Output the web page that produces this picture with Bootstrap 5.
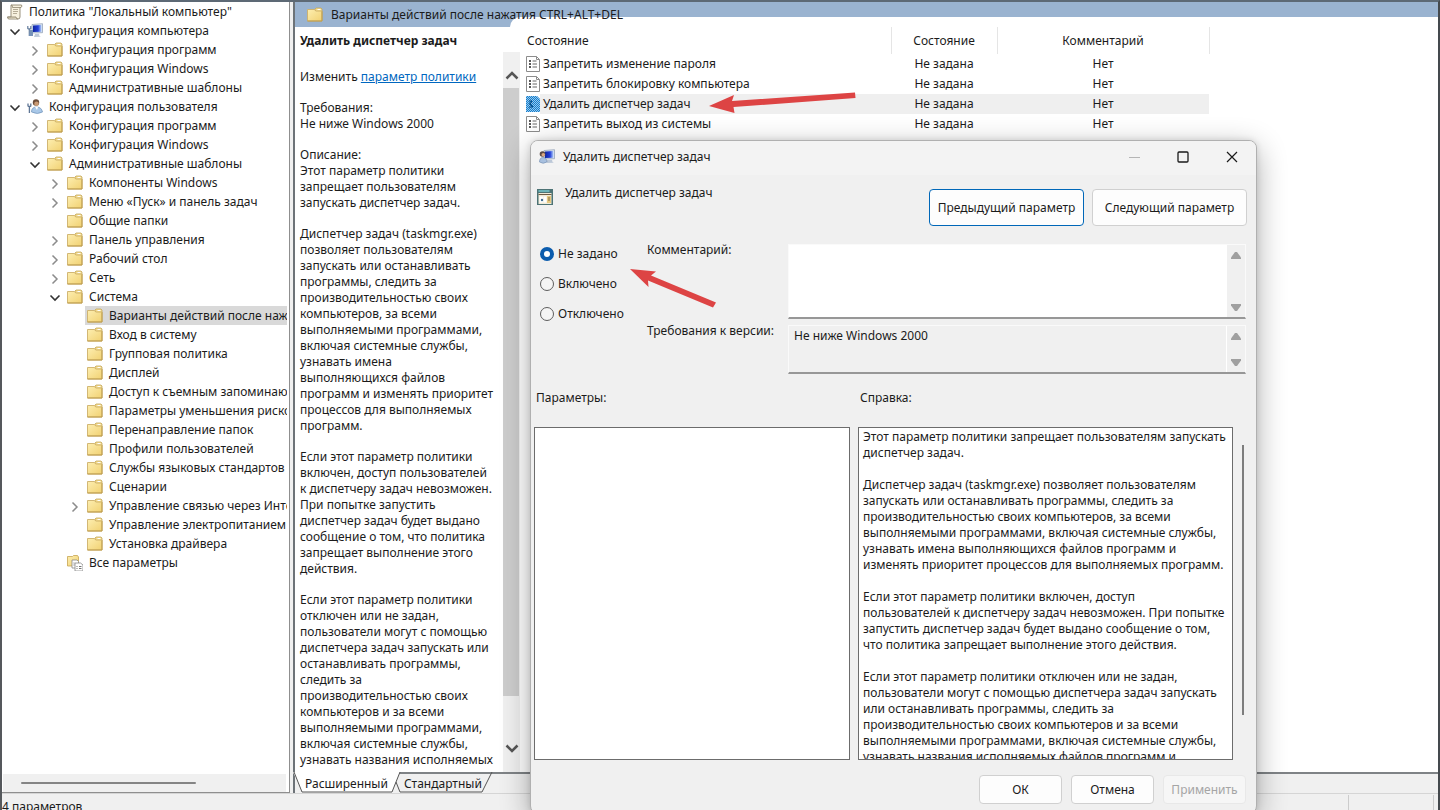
<!DOCTYPE html>
<html lang="ru">
<head>
<meta charset="utf-8">
<meta name="viewport" content="width=device-width, initial-scale=1">
<title>Редактор локальной групповой политики</title>
<link href="https://cdn.jsdelivr.net/npm/bootstrap@5.3.0/dist/css/bootstrap.min.css" rel="stylesheet">
<style>
:root{--face:#f0f0f0;--line:#7d8083}
body{font-family:"Noto Sans","Open Sans",sans-serif;font-size:12px;line-height:16px;color:#1b1b1b;background:var(--face)}
button,input,textarea{font:inherit;color:inherit}
.app-window{height:100vh;border-left:2px solid #55585c;border-top:2px solid #5d6975;border-right:2px solid #44494d}
/* tree */
.tree-pane{width:288px;background:#fff;border-right:1px solid #8f8f8f;border-bottom:1px solid #8f8f8f}
.tree-pane ul{list-style:none;margin:0;padding:0}
.tree-pane ul ul{padding-left:20px}
.tree-pane .tree-root{padding-left:5px;margin-right:2px;overflow:hidden}
.tree-row{height:19px;white-space:nowrap}
.twisty{width:20px;height:16px;padding:0;border:0;background:none;flex:none;display:flex}
.twisty svg{margin:3px 0 0 2px}
.leaf-gap{width:20px;flex:none}
.node{height:19px;display:flex;align-items:center;gap:6px;color:inherit;text-decoration:none;padding-right:4px}
.node.chosen{background:#d9d9d9;box-shadow:-2px 0 0 #d9d9d9;flex:1}
.ico{width:16px;height:16px;flex:none;overflow:visible}
.hscroll{height:18px;margin:0 3px 0 1px;background:var(--face);padding:8px 0 0 18px}
.hscroll div{height:2px;width:66%;background:#858585;border-radius:1px}
/* result pane */
.result-pane{border-left:2px solid #6d7378;margin-left:3px;min-width:0}
.result-title{position:relative;height:25px;background:#9ab3d0}
.result-title::after{content:"";position:absolute;left:215px;right:0;top:15px;bottom:0;background:#fff;border-top-left-radius:12px}
.result-title h1{font-size:12px;line-height:16px;font-weight:400;margin:0;position:relative;z-index:1}
.info-pane{width:208px;overflow:hidden;white-space:nowrap;padding:6px 0 0 5px}
.info-pane p{margin:0 0 15px}
.info-pane a{color:#0067c0}
.info-pane h2{font-size:12px;line-height:16px;font-weight:700;margin:0 0 20px}
.vscroll{width:17px;margin-top:25px;background:var(--face)}
.vscroll button{border:0;background:none;padding:8px 0 0;width:17px;height:36px}
.vscroll .btn-down{height:76px;padding:0 0 20px}
.vscroll .thumb{width:16px;flex:1;background:#cdcdcd}
.policy-list{table-layout:fixed;width:685px;border-collapse:collapse;white-space:nowrap}
.policy-list th{font-weight:400;height:27px;border-right:1px solid #e5e5e5;text-align:center;padding:0}
.policy-list th:first-child{text-align:left;padding-left:3px}
.policy-list td{height:20px;padding:0;text-align:center}
.policy-list td:first-child{text-align:left}
.policy-list .ico{margin:0 2px 0 1px}
.policy-list .picked td{background:#efefef}
.policy-list .picked td:first-child{background:linear-gradient(90deg,#fff 16px,#efefef 16px)}
.view-tabs{height:21px;border-top:2px solid #7f8386;margin-left:-2px}
.view-tabs button{border:0;background:none;padding:2px 0 0;height:18px;position:relative}
.view-tabs svg{position:absolute;left:0;top:-2px}
.status{height:17px;border-top:1px solid #d5d5d5;line-height:16px;overflow:hidden;padding-top:5px}
.status .cells{border-right:1px solid #ccc;width:86px;border-left:1px solid #ccc;margin:-4px 4px 0 0}
/* dialog */
.policy-dialog{position:absolute;left:530px;top:140px;width:727px;background:var(--face);border:1px solid #b0b0b0;border-radius:8px;box-shadow:0 8px 30px rgba(0,0,0,.32),0 0 6px rgba(0,0,0,.12);overflow:hidden}
.dlg-title{height:34px;background:#f3f3f3;padding:0 0 2px 8px}
.dlg-title h2,.dlg-head h3{font-size:12px;line-height:16px;font-weight:400;margin:0}
.win-btn{width:49px;height:32px;border:0;background:none;padding:0}
.win-btn svg{display:block;margin:0 auto}
.dlg-head{padding:10px 9px 0 6px}
.push{background:#fdfdfd;border:1px solid #d0d0d0;border-radius:4px;padding:0;height:29px;width:83px}
.push.wide{width:155px;height:37px}
.push.focus-blue{border-color:#0067b8}
.push:disabled{background:#f6f6f6;border-color:#e8e8e8;color:#a5a5a5}
.dlg-body{padding-right:10px}
.states{width:108px;padding:4px 0 0 9px}
.states div{height:30px;display:flex;align-items:flex-start;gap:4px}
.states input{appearance:none;width:14px;height:14px;border:1px solid #5e5e5e;border-radius:50%;background:#f5f5f5;margin:1px 0 0;flex:none}
.states input:checked{border:4px solid #0b5cad;background:#fff}
.field-lab{width:141px;flex:none}
.well{background:#fff;border:1px solid #fafafa;border-bottom:2px solid #979797;margin-top:2px;height:75px}
.well textarea{border:0;resize:none;background:none;padding:2px 5px;overflow:hidden;outline:0;flex:1;display:block}
.well.grey{background:var(--face);height:49px}
.well.grey textarea{border-right:1px solid #fff}
.spin{width:18px;background:var(--face)}
.spin button{border:0;background:none;padding:0;height:19px;line-height:0}
.dlg-panes{padding-left:3px}
.pane-cap{height:37px;padding-left:2px}
.opts-pane{width:316px}
.help-pane{width:375px}
.box{border:1px solid #6c6c6c;background:#fff;height:333px;overflow:hidden}
.help-text{padding:1px 4px;white-space:nowrap}
.help-text p{margin:0 0 16px}
.help-bar{width:2px;height:270px;margin:55px 0 0 9px;background:#7d7d7d}
.dlg-foot{gap:9px;padding:15px 10px 9px}
.pointer{position:absolute;pointer-events:none}
</style>
</head>
<body class="overflow-hidden">
<svg width="0" height="0" class="position-absolute" aria-hidden="true">
  <defs>
    <linearGradient id="gold" x1="0" y1="0" x2="1" y2="1"><stop offset="0" stop-color="#fdeeb0"/><stop offset="1" stop-color="#f1d172"/></linearGradient>
    <linearGradient id="screen" x1="0" y1="0" x2="1" y2="0"><stop offset="0" stop-color="#1025a0"/><stop offset=".6" stop-color="#2340d8"/><stop offset="1" stop-color="#b7d3fb"/></linearGradient>
    <symbol id="folder" viewBox="0 0 16 16"><path d="M8 4V2L9 1h5l1 1V5" fill="#f5dc8d" stroke="#c2a65e" stroke-width=".8"/><path d="M.5 2.500h7l1.200 1.500H15V14H.5z" fill="url(#gold)" stroke="#cdb06a" stroke-width=".9"/><path d="M10.500 2.500h3" stroke="#fff" stroke-width="1"/><path d="M.5 14H15V4.500" fill="none" stroke="#bd9c4d"/></symbol>
    <symbol id="scroll" viewBox="0 0 16 16"><path d="M4 1h10.500q1 1-.5 2.500h-1V13q0 2-2 2H2q-1.500 0-1.500-2H4z" fill="#f7f1df" stroke="#8f8671" stroke-width=".9"/><path d="M.5 13h8.500q0 2 2 2" fill="#e5dcc2" stroke="#8f8671" stroke-width=".9"/><path d="M4 1q1.800 0 1.500 2.500H13" fill="none" stroke="#8f8671" stroke-width=".8"/><path d="M6 5.500h5M6 7.500h5M6 9.500h4" stroke="#a39a84" stroke-width=".8"/></symbol>
    <symbol id="pc" viewBox="0 0 16 16"><path d="M5 1.500l10.500-.8v9L5 10z" fill="#dbe5f2" stroke="#8b9bb2" stroke-width=".7"/><path d="M6 2.500l8.500-.6v6.800L6 9z" fill="url(#screen)"/><path d="M8 11l4-.3.500 2.300 1.500.8-7 .2z" fill="#bcc8d8"/><path d="M.8 3v3M3.800 3v3M.8 5.800h3M2.300 6v7" stroke="#647d9d" stroke-width="1.200"/><path d="M3 7h3v6H2z" fill="#7692b8"/></symbol>
    <symbol id="userpc" viewBox="0 0 16 16"><path d="M5 1.500l10.500-.8v9L5 10z" fill="#dbe5f2" stroke="#8b9bb2" stroke-width=".7"/><path d="M6 2.500l8.500-.6v6.800L6 9z" fill="url(#screen)"/><path d="M8 11l5-.3.500 2.300 1.500.8-7 .2z" fill="#bcc8d8"/><circle cx="3.500" cy="5" r="2.800" fill="#5b4a43"/><circle cx="4.300" cy="5.800" r="1.800" fill="#dba981"/><path d="M.5 13q0-4.500 3.500-4.500t4 4.500q-4 2.500-7.500 0z" fill="#a8c0df" stroke="#6e89ad" stroke-width=".6"/></symbol>
    <symbol id="user" viewBox="0 0 16 16"><circle cx="9" cy="3.500" r="3.200" fill="#6b4d3a"/><circle cx="9.500" cy="4.800" r="2.300" fill="#c99a74"/><path d="M4.500 13q0-5 5-5t6 5q-5 3-11 0z" fill="#a9c8e8" stroke="#6e91b8" stroke-width=".7"/><path d="M8 8l2 3 1-3z" fill="#fff"/><path d="M1 4.500v3M3.800 4.500v3M1 7.300h3M2.400 7v7" stroke="#5f7695" stroke-width="1.300"/></symbol>
    <symbol id="all" viewBox="0 0 16 16"><path d="M.5 1.500h5l1-1h4l1 1.500v9H.5z" fill="url(#gold)" stroke="#c7a552" stroke-width=".8"/><path d="M5 5h5l1.500 1.500V13H5z" fill="#fff" stroke="#888" stroke-width=".8"/><path d="M8 8h5.500l2.500 2v6H8z" fill="#fff" stroke="#888" stroke-width=".8"/><path d="M9.500 11.500h1M12 11.500h2.500M9.500 13.500h1M12 13.500h2.500M6.500 8h1M6.500 10h1" stroke="#777"/></symbol>
    <symbol id="sheet" viewBox="0 0 16 16"><path d="M1.500.5h10l3 3v12h-13z" fill="#fff" stroke="#8c8c8c"/><path d="M11.500.5v3h3" fill="none" stroke="#8c8c8c"/><path d="M4 5h2M4 8h2M4 11h2" stroke="#222" stroke-width="1.600"/><path d="M7.500 5h4M7.500 8h4.500M7.500 11h4.500" stroke="#666"/></symbol>
    <pattern id="dots" width="2" height="2" patternUnits="userSpaceOnUse"><rect width="2" height="2" fill="#c4e1f5"/><path d="M0 0h1v1H0zM1 1h1v1H1z" fill="#0b78c8"/></pattern>
    <symbol id="sheet-on" viewBox="0 0 16 16"><path d="M1 0h11l3 3v13H1z" fill="url(#dots)"/><path d="M1 0h11l3 3v13H1z" fill="#2b90dc" fill-opacity=".3"/><path d="M4 5h3M4 8h2M4 11h3M7 5l-2 3 3 3" stroke="#0b4f88" stroke-width="1.100" fill="none"/></symbol>
    <symbol id="setting" viewBox="0 0 16 16"><path d="M0 0h16v16H0z" fill="#4d7375"/><path d="M1.500 1h11v2h-11z" fill="#6cb3b8"/><path d="M1.500 4h13v11h-13z" fill="#f0ead7"/><path d="M1.500 5.500h13" stroke="#6b5b44"/><path d="M2.500 7.500h4v6h-4zM7 7.500h2.500v6H7z" fill="#fff"/><circle cx="5" cy="11" r="1.200" fill="#3d6b92"/><path d="M10 7h4v7h-4z" fill="#e7c980"/><path d="M11 9h2M11 11h2" stroke="#7a6b45"/></symbol>
    <symbol id="open" viewBox="0 0 12 12"><path d="M1.500 3.500L6 8l4.500-4.500" fill="none" stroke="#333" stroke-width="1.600"/></symbol>
    <symbol id="shut" viewBox="0 0 12 12"><path d="M3.500 1.500L8 6l-4.500 4.500" fill="none" stroke="#8c8c8c" stroke-width="1.500"/></symbol>
  </defs>
</svg>

<div class="app-window d-flex flex-column position-relative">
  <div class="d-flex flex-grow-1" style="min-height:0">
    <nav class="tree-pane d-flex flex-column flex-shrink-0 overflow-hidden" aria-label="Дерево политик">
      <ul class="tree-root flex-grow-1">
        <li><div class="tree-row d-flex align-items-center"><a href="#" class="node"><svg class="ico"><use href="#scroll"/></svg>Политика "Локальный компьютер"</a></div></li>
        <li><div class="tree-row d-flex align-items-center"><button class="twisty" aria-label="Свернуть"><svg width="12" height="12"><use href="#open"/></svg></button><a href="#" class="node"><svg class="ico"><use href="#pc"/></svg>Конфигурация компьютера</a></div>
          <ul>
            <li><div class="tree-row d-flex align-items-center"><button class="twisty" aria-label="Развернуть"><svg width="12" height="12"><use href="#shut"/></svg></button><a href="#" class="node"><svg class="ico"><use href="#folder"/></svg>Конфигурация программ</a></div></li>
            <li><div class="tree-row d-flex align-items-center"><button class="twisty" aria-label="Развернуть"><svg width="12" height="12"><use href="#shut"/></svg></button><a href="#" class="node"><svg class="ico"><use href="#folder"/></svg>Конфигурация Windows</a></div></li>
            <li><div class="tree-row d-flex align-items-center"><button class="twisty" aria-label="Развернуть"><svg width="12" height="12"><use href="#shut"/></svg></button><a href="#" class="node"><svg class="ico"><use href="#folder"/></svg>Административные шаблоны</a></div></li>
          </ul></li>
        <li><div class="tree-row d-flex align-items-center"><button class="twisty" aria-label="Свернуть"><svg width="12" height="12"><use href="#open"/></svg></button><a href="#" class="node"><svg class="ico"><use href="#user"/></svg>Конфигурация пользователя</a></div>
          <ul>
            <li><div class="tree-row d-flex align-items-center"><button class="twisty" aria-label="Развернуть"><svg width="12" height="12"><use href="#shut"/></svg></button><a href="#" class="node"><svg class="ico"><use href="#folder"/></svg>Конфигурация программ</a></div></li>
            <li><div class="tree-row d-flex align-items-center"><button class="twisty" aria-label="Развернуть"><svg width="12" height="12"><use href="#shut"/></svg></button><a href="#" class="node"><svg class="ico"><use href="#folder"/></svg>Конфигурация Windows</a></div></li>
            <li><div class="tree-row d-flex align-items-center"><button class="twisty" aria-label="Свернуть"><svg width="12" height="12"><use href="#open"/></svg></button><a href="#" class="node"><svg class="ico"><use href="#folder"/></svg>Административные шаблоны</a></div>
              <ul>
                <li><div class="tree-row d-flex align-items-center"><button class="twisty" aria-label="Развернуть"><svg width="12" height="12"><use href="#shut"/></svg></button><a href="#" class="node"><svg class="ico"><use href="#folder"/></svg>Компоненты Windows</a></div></li>
                <li><div class="tree-row d-flex align-items-center"><button class="twisty" aria-label="Развернуть"><svg width="12" height="12"><use href="#shut"/></svg></button><a href="#" class="node"><svg class="ico"><use href="#folder"/></svg>Меню «Пуск» и панель задач</a></div></li>
                <li><div class="tree-row d-flex align-items-center"><span class="leaf-gap"></span><a href="#" class="node"><svg class="ico"><use href="#folder"/></svg>Общие папки</a></div></li>
                <li><div class="tree-row d-flex align-items-center"><button class="twisty" aria-label="Развернуть"><svg width="12" height="12"><use href="#shut"/></svg></button><a href="#" class="node"><svg class="ico"><use href="#folder"/></svg>Панель управления</a></div></li>
                <li><div class="tree-row d-flex align-items-center"><button class="twisty" aria-label="Развернуть"><svg width="12" height="12"><use href="#shut"/></svg></button><a href="#" class="node"><svg class="ico"><use href="#folder"/></svg>Рабочий стол</a></div></li>
                <li><div class="tree-row d-flex align-items-center"><button class="twisty" aria-label="Развернуть"><svg width="12" height="12"><use href="#shut"/></svg></button><a href="#" class="node"><svg class="ico"><use href="#folder"/></svg>Сеть</a></div></li>
                <li><div class="tree-row d-flex align-items-center"><button class="twisty" aria-label="Свернуть"><svg width="12" height="12"><use href="#open"/></svg></button><a href="#" class="node"><svg class="ico"><use href="#folder"/></svg>Система</a></div>
                  <ul>
                    <li><div class="tree-row d-flex align-items-center"><span class="leaf-gap"></span><a href="#" class="node chosen"><svg class="ico"><use href="#folder"/></svg>Варианты действий после нажатия</a></div></li>
                    <li><div class="tree-row d-flex align-items-center"><span class="leaf-gap"></span><a href="#" class="node"><svg class="ico"><use href="#folder"/></svg>Вход в систему</a></div></li>
                    <li><div class="tree-row d-flex align-items-center"><span class="leaf-gap"></span><a href="#" class="node"><svg class="ico"><use href="#folder"/></svg>Групповая политика</a></div></li>
                    <li><div class="tree-row d-flex align-items-center"><span class="leaf-gap"></span><a href="#" class="node"><svg class="ico"><use href="#folder"/></svg>Дисплей</a></div></li>
                    <li><div class="tree-row d-flex align-items-center"><span class="leaf-gap"></span><a href="#" class="node"><svg class="ico"><use href="#folder"/></svg>Доступ к съемным запоминающим</a></div></li>
                    <li><div class="tree-row d-flex align-items-center"><span class="leaf-gap"></span><a href="#" class="node"><svg class="ico"><use href="#folder"/></svg>Параметры уменьшения рисков</a></div></li>
                    <li><div class="tree-row d-flex align-items-center"><span class="leaf-gap"></span><a href="#" class="node"><svg class="ico"><use href="#folder"/></svg>Перенаправление папок</a></div></li>
                    <li><div class="tree-row d-flex align-items-center"><span class="leaf-gap"></span><a href="#" class="node"><svg class="ico"><use href="#folder"/></svg>Профили пользователей</a></div></li>
                    <li><div class="tree-row d-flex align-items-center"><span class="leaf-gap"></span><a href="#" class="node"><svg class="ico"><use href="#folder"/></svg>Службы языковых стандартов</a></div></li>
                    <li><div class="tree-row d-flex align-items-center"><span class="leaf-gap"></span><a href="#" class="node"><svg class="ico"><use href="#folder"/></svg>Сценарии</a></div></li>
                    <li><div class="tree-row d-flex align-items-center"><button class="twisty" aria-label="Развернуть"><svg width="12" height="12"><use href="#shut"/></svg></button><a href="#" class="node"><svg class="ico"><use href="#folder"/></svg>Управление связью через Интернет</a></div></li>
                    <li><div class="tree-row d-flex align-items-center"><span class="leaf-gap"></span><a href="#" class="node"><svg class="ico"><use href="#folder"/></svg>Управление электропитанием</a></div></li>
                    <li><div class="tree-row d-flex align-items-center"><span class="leaf-gap"></span><a href="#" class="node"><svg class="ico"><use href="#folder"/></svg>Установка драйвера</a></div></li>
                  </ul></li>
                <li><div class="tree-row d-flex align-items-center"><span class="leaf-gap"></span><a href="#" class="node"><svg class="ico"><use href="#all"/></svg>Все параметры</a></div></li>
              </ul></li>
          </ul></li>
      </ul>
      <div class="hscroll"><div></div></div>
    </nav>

    <main class="result-pane d-flex flex-column flex-grow-1">
      <div class="result-title d-flex align-items-center ps-2 flex-shrink-0"><svg class="ico ms-1 me-2"><use href="#folder"/></svg><h1>Варианты действий после нажатия CTRL+ALT+DEL</h1></div>
      <div class="d-flex flex-grow-1 bg-white" style="min-height:0">
        <section class="info-pane flex-shrink-0">
          <h2>Удалить диспетчер задач</h2>
          <p>Изменить <a href="#">параметр политики</a></p>
          <p>Требования:<br>Не ниже Windows 2000</p>
          <p>Описание:<br>Этот параметр политики<br>запрещает пользователям<br>запускать диспетчер задач.</p>
          <p>Диспетчер задач (taskmgr.exe)<br>позволяет пользователям<br>запускать или останавливать<br>программы, следить за<br>производительностью своих<br>компьютеров, за всеми<br>выполняемыми программами,<br>включая системные службы,<br>узнавать имена<br>выполняющихся файлов<br>программ и изменять приоритет<br>процессов для выполняемых<br>программ.</p>
          <p>Если этот параметр политики<br>включен, доступ пользователей<br>к диспетчеру задач невозможен.<br>При попытке запустить<br>диспетчер задач будет выдано<br>сообщение о том, что политика<br>запрещает выполнение этого<br>действия.</p>
          <p>Если этот параметр политики<br>отключен или не задан,<br>пользователи могут с помощью<br>диспетчера задач запускать или<br>останавливать программы,<br>следить за<br>производительностью своих<br>компьютеров и за всеми<br>выполняемыми программами,<br>включая системные службы,<br>узнавать названия исполняемых</p>
        </section>
        <div class="vscroll d-flex flex-column flex-shrink-0">
          <button aria-label="Вверх"><svg width="14" height="10" viewBox="0 0 14 10"><path d="M1.500 8.500L7 3l5.500 5.500" fill="none" stroke="#555" stroke-width="2.500"/></svg></button>
          <div class="thumb"></div>
          <button class="btn-down" aria-label="Вниз"><svg width="14" height="10" viewBox="0 0 14 10" class="mt-5"><path d="M1.500 1.500L7 7l5.500-5.500" fill="none" stroke="#555" stroke-width="2.500"/></svg></button>
        </div>
        <section class="flex-grow-1 ps-1">
          <table class="policy-list">
            <colgroup><col style="width:367px"><col style="width:106px"><col style="width:212px"></colgroup>
            <thead><tr><th>Состояние</th><th>Состояние</th><th>Комментарий</th></tr></thead>
            <tbody>
              <tr><td><svg class="ico"><use href="#sheet"/></svg>Запретить изменение пароля</td><td>Не задана</td><td>Нет</td></tr>
              <tr><td><svg class="ico"><use href="#sheet"/></svg>Запретить блокировку компьютера</td><td>Не задана</td><td>Нет</td></tr>
              <tr class="picked"><td><svg class="ico"><use href="#sheet-on"/></svg>Удалить диспетчер задач</td><td>Не задана</td><td>Нет</td></tr>
              <tr><td><svg class="ico"><use href="#sheet"/></svg>Запретить выход из системы</td><td>Не задана</td><td>Нет</td></tr>
            </tbody>
          </table>
        </section>
      </div>
      <div class="view-tabs position-relative flex-shrink-0">
        <svg width="202" height="21" aria-hidden="true"><path d="M0 0l9 20h90l8-20z" fill="#fff"/><path d="M1 0l8 20h90l8-20M103 10l4 10h82l10-20" fill="none" stroke="#555"/></svg>
        <button class="ms-2 ps-1">Расширенный</button><button class="ms-3">Стандартный</button>
      </div>
    </main>
  </div>
  <footer class="status d-flex justify-content-between flex-shrink-0"><span>4 параметров</span><span class="cells"></span></footer>

  <svg class="pointer" style="left:704px;top:86px" width="156" height="32" viewBox="706 88 156 32" aria-hidden="true"><path d="M709 106l25-11-2 6 123-8.500.5 5.500-122 9 1 6z" fill="#dd4444"/></svg>
</div>

<section class="policy-dialog" role="dialog" aria-labelledby="dlgTitle">
  <header class="dlg-title d-flex align-items-center">
    <svg class="ico"><use href="#userpc"/></svg><h2 id="dlgTitle" class="ms-2 flex-grow-1">Удалить диспетчер задач</h2>
    <button class="win-btn" aria-label="Свернуть" disabled><svg width="12" height="12"><path d="M1 6.500h11" stroke="#b5b5b5"/></svg></button>
    <button class="win-btn" aria-label="Развернуть"><svg width="12" height="12"><rect x="1" y="1" width="10" height="10" rx="1" fill="none" stroke="#1a1a1a" stroke-width="1.300"/></svg></button>
    <button class="win-btn" aria-label="Закрыть"><svg width="12" height="12"><path d="M1 1l10 10M11 1L1 11" stroke="#1a1a1a" stroke-width="1.200"/></svg></button>
  </header>
  <div class="dlg-head d-flex align-items-start">
    <svg class="ico mt-1"><use href="#setting"/></svg><h3 class="ms-2 ps-1 flex-grow-1">Удалить диспетчер задач</h3>
    <button class="push wide focus-blue mt-1">Предыдущий параметр</button><button class="push wide ms-2 mt-1">Следующий параметр</button>
  </div>
  <div class="dlg-body d-flex mt-3">
    <div class="states">
      <div><input type="radio" name="st" id="s1" checked><label for="s1">Не задано</label></div>
      <div><input type="radio" name="st" id="s2"><label for="s2">Включено</label></div>
      <div><input type="radio" name="st" id="s3"><label for="s3">Отключено</label></div>
    </div>
    <div class="flex-grow-1 d-flex flex-column gap-1 ps-2">
      <div class="d-flex"><label class="field-lab" for="cm">Комментарий:</label>
        <div class="well d-flex flex-grow-1"><textarea id="cm" rows="4"></textarea>
          <div class="spin d-flex flex-column justify-content-between"><button aria-label="Вверх"><svg width="10" height="8"><path d="M0 8V6.500L4 1h2l4 5.500V8z" fill="#a0a0a0"/></svg></button><button aria-label="Вниз"><svg width="10" height="8"><path d="M0 0v1.500L4 7h2l4-5.500V0z" fill="#a0a0a0"/></svg></button></div></div></div>
      <div class="d-flex"><label class="field-lab" for="rq">Требования к версии:</label>
        <div class="well grey d-flex flex-grow-1"><textarea id="rq" rows="2" readonly>Не ниже Windows 2000</textarea>
          <div class="spin d-flex flex-column justify-content-between"><button aria-label="Вверх"><svg width="10" height="8"><path d="M0 8V6.500L4 1h2l4 5.500V8z" fill="#a0a0a0"/></svg></button><button aria-label="Вниз"><svg width="10" height="8"><path d="M0 0v1.500L4 7h2l4-5.500V0z" fill="#a0a0a0"/></svg></button></div></div></div>
    </div>
  </div>
  <div class="dlg-panes d-flex mt-3">
    <div class="opts-pane me-2"><div class="pane-cap">Параметры:</div><div class="box"></div></div>
    <div class="help-pane"><div class="pane-cap">Справка:</div>
      <div class="box help-text">
        <p>Этот параметр политики запрещает пользователям запускать<br>диспетчер задач.</p>
        <p>Диспетчер задач (taskmgr.exe) позволяет пользователям<br>запускать или останавливать программы, следить за<br>производительностью своих компьютеров, за всеми<br>выполняемыми программами, включая системные службы,<br>узнавать имена выполняющихся файлов программ и<br>изменять приоритет процессов для выполняемых программ.</p>
        <p>Если этот параметр политики включен, доступ<br>пользователей к диспетчеру задач невозможен. При попытке<br>запустить диспетчер задач будет выдано сообщение о том,<br>что политика запрещает выполнение этого действия.</p>
        <p>Если этот параметр политики отключен или не задан,<br>пользователи могут с помощью диспетчера задач запускать<br>или останавливать программы, следить за<br>производительностью своих компьютеров и за всеми<br>выполняемыми программами, включая системные службы,<br>узнавать названия исполняемых файлов программ и</p>
      </div></div>
    <div class="help-bar"></div>
  </div>
  <footer class="dlg-foot d-flex justify-content-end"><button class="push">ОК</button><button class="push">Отмена</button><button class="push" disabled>Применить</button></footer>
  <svg class="pointer" style="left:98px;top:126px" width="90" height="44" viewBox="629 267 90 44" aria-hidden="true"><path d="M630 269l26 2.500-5 4 65 27-3 5-65-27 .5 6.500z" fill="#dd4444"/></svg>
</section>
<script src="https://cdn.jsdelivr.net/npm/bootstrap@5.3.0/dist/js/bootstrap.bundle.min.js"></script>
</body>
</html>
